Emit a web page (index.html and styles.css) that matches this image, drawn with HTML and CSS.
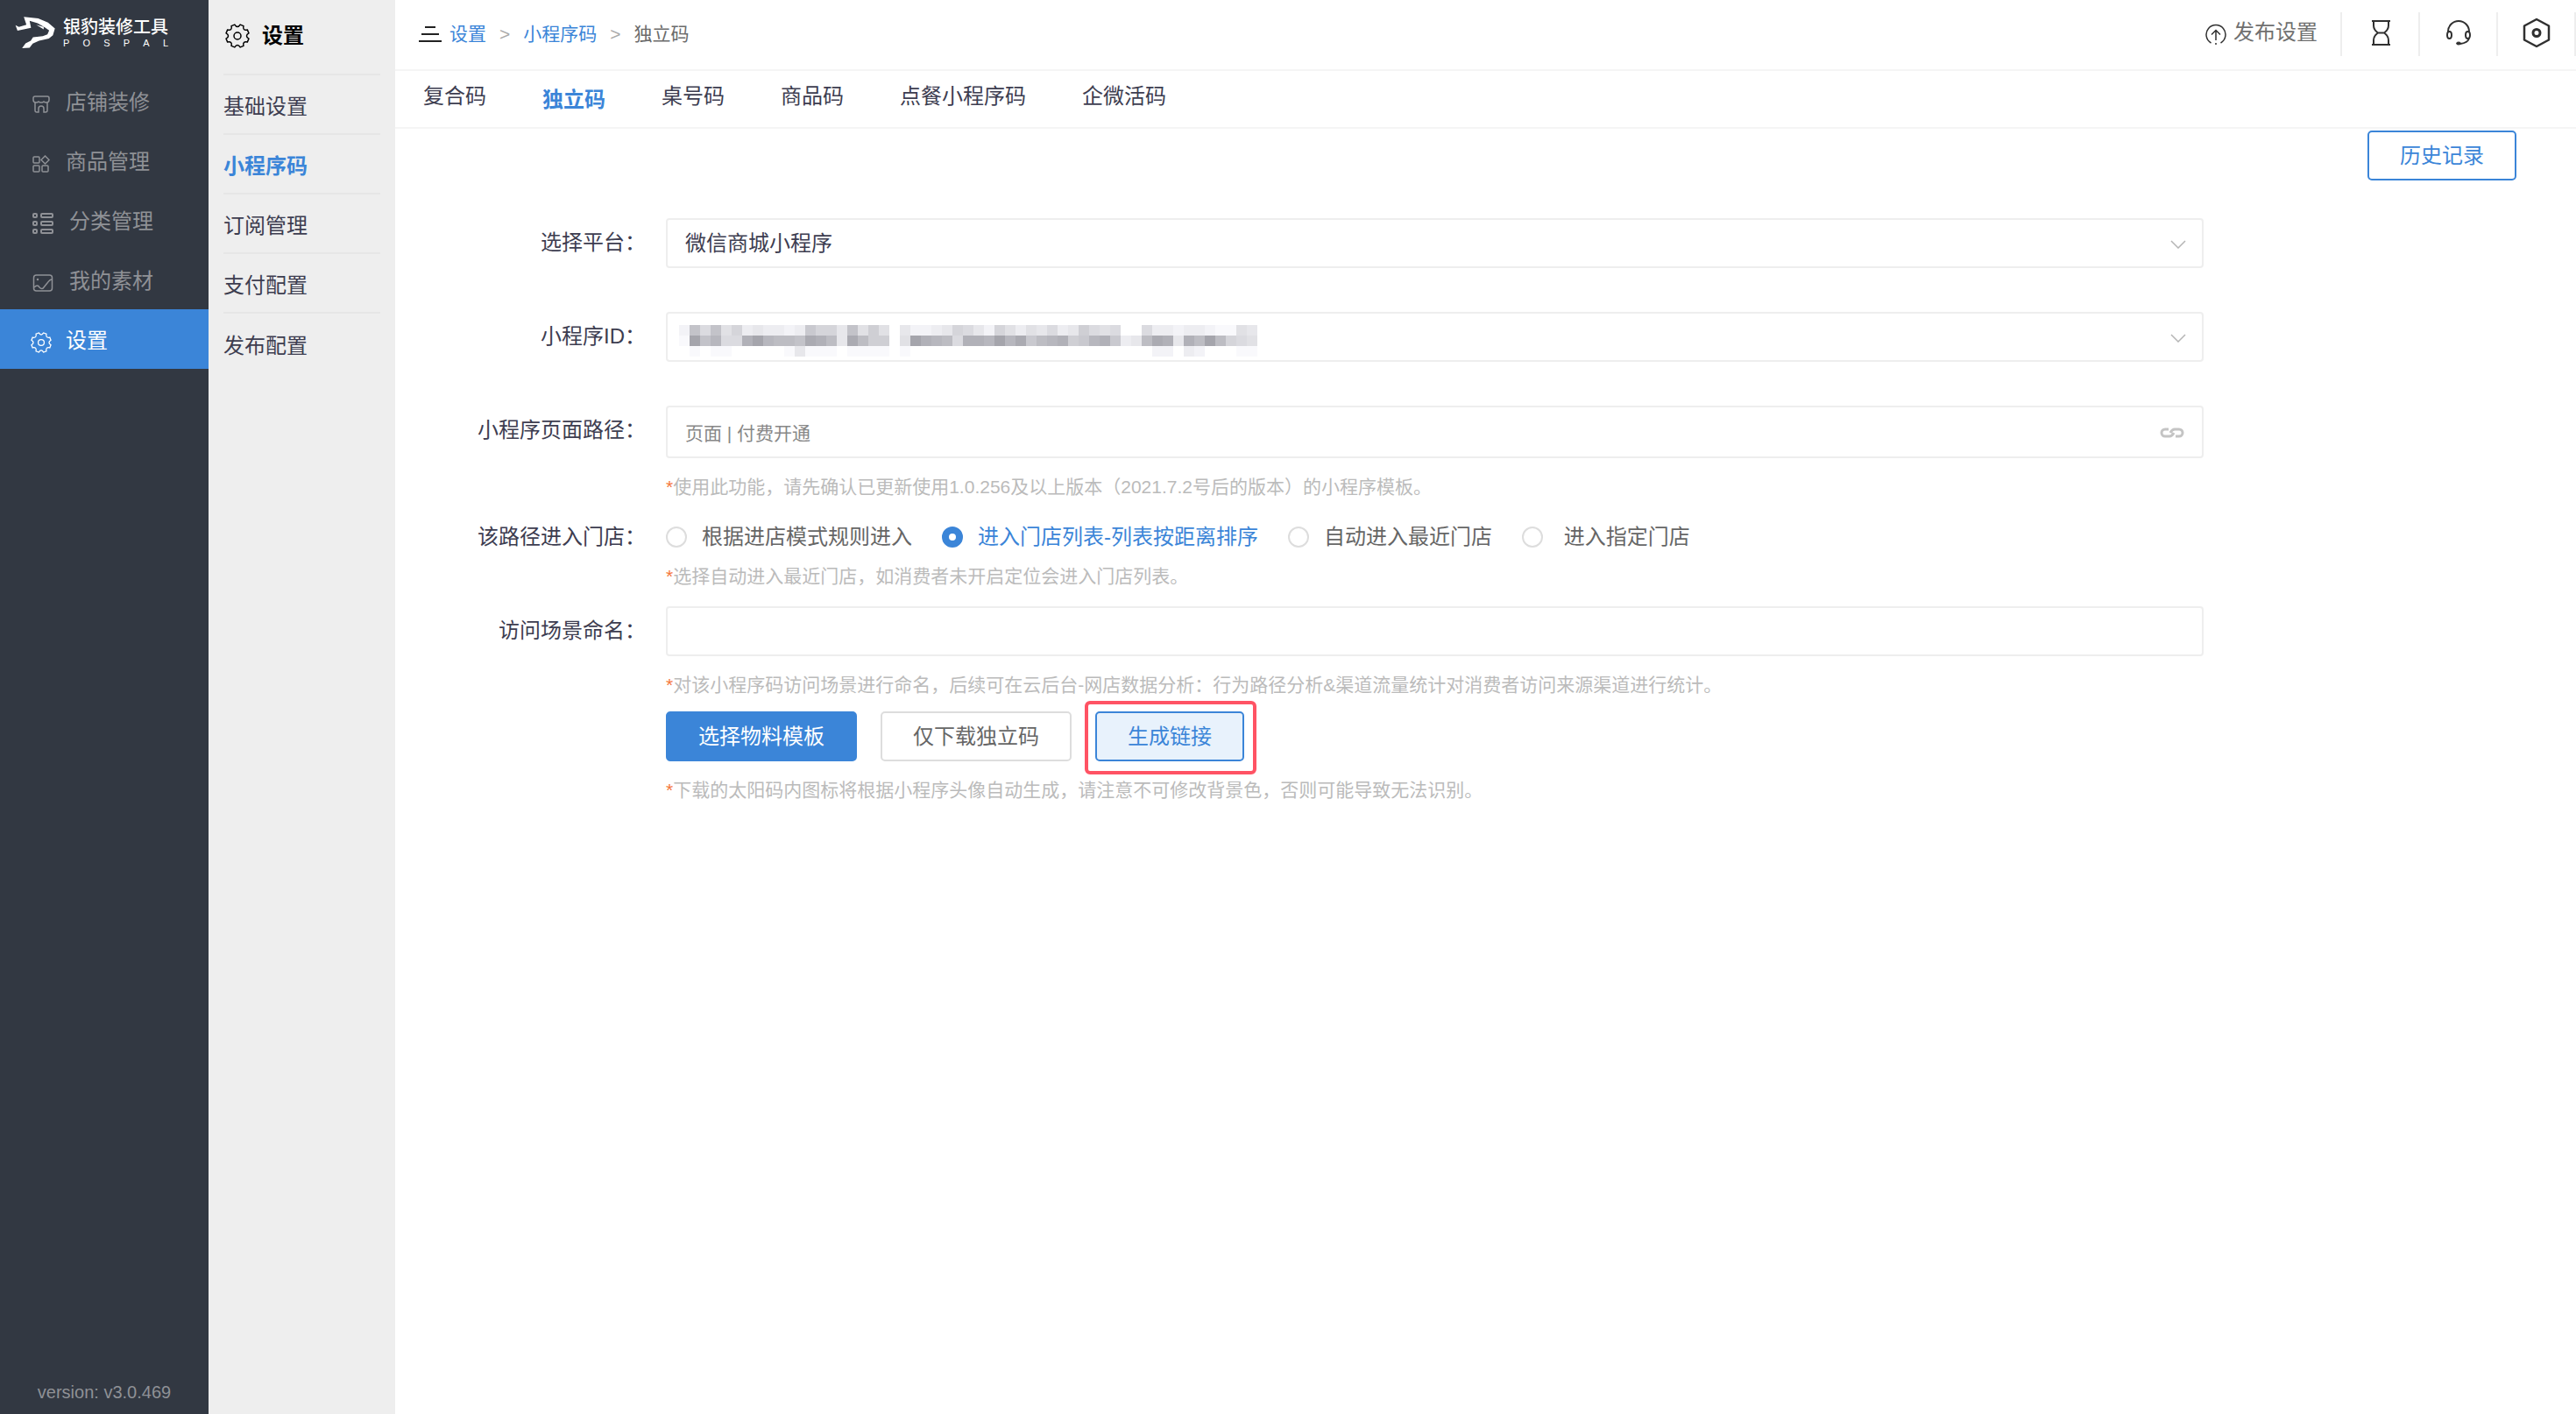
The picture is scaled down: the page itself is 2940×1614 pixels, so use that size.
FILE: index.html
```html
<!DOCTYPE html>
<html lang="zh-CN">
<head>
<meta charset="utf-8">
<title>独立码 - 银豹装修工具</title>
<meta name="viewport" content="width=device-width, initial-scale=1">
<link rel="stylesheet" href="styles.css">
</head>
<body>
<svg class="sprite" aria-hidden="true">
  <symbol id="gear" viewBox="-14 -14 28 28">
    <path d="M-3.200-12.900Q0-8 3.200-12.900L6.900-11.400Q5.700-5.700 11.400-6.900L12.900-3.200Q8 0 12.900 3.200L11.400 6.900Q5.700 5.700 6.900 11.400L3.200 12.900Q0 8-3.200 12.900L-6.900 11.400Q-5.700 5.700-11.400 6.900L-12.900 3.200Q-8 0-12.900-3.200L-11.400-6.900Q-5.700-5.700-6.900-11.400Z"/>
    <circle r="4"/>
  </symbol>
  <symbol id="chevron" viewBox="0 0 18 10"><path d="M1 1l8 8 8-8"/></symbol>
</svg>
<div class="app">
  <aside class="sidebar">
    <div class="brand">
      <svg class="brand-mark" viewBox="50 52 140 114" aria-hidden="true">
        <path fill="currentColor" d="M52 84l12 6 26-8-9-27 50 5 34 15 24 20-7 24-14 11-34 8-22 10-11 14-26 2 12-17 18-9 8-12 34-4 16-6 6-14-14-10-26-15-28-8 5 24-47 10zM124 82l26 8v8z"/>
      </svg>
      <div class="brand-text">
        <div class="brand-name">银豹装修工具</div>
        <div class="brand-sub"><span>P</span><span>O</span><span>S</span><span>P</span><span>A</span><span>L</span></div>
      </div>
    </div>
    <nav class="nav">
      <a class="nav-item" href="#">
        <svg class="nav-icon" viewBox="0 0 20 20"><path d="M3 1h14q2 0 2 2v2q0 3-3 3-2 0-3-1-1 1-3 1T7 7Q6 8 4 8 1 8 1 5V3q0-2 2-2zM3 8v9q0 2 2 2h2v-4q0-3 3-3t3 3v4h2q2 0 2-2V8"/></svg>
        店铺装修
      </a>
      <a class="nav-item" href="#">
        <svg class="nav-icon" viewBox="0 0 20 20"><rect x="1" y="2" width="7" height="7" rx="1"/><rect x="1" y="12" width="7" height="7" rx="1"/><rect x="11" y="12" width="7" height="7" rx="1"/><path d="M14.500 1l4.500 4.500-4.500 4.500L10 5.500z"/></svg>
        商品管理
      </a>
      <a class="nav-item" href="#">
        <svg class="nav-icon nav-icon--wide" viewBox="0 0 24 24"><g stroke-width="2"><rect x="1" y="1" width="4" height="4" rx="1"/><rect x="1" y="10" width="4" height="4" rx="1"/><rect x="1" y="19" width="4" height="4" rx="1"/><rect x="10" y="1" width="13" height="4" rx="1"/><rect x="10" y="10" width="13" height="4" rx="1"/><rect x="10" y="19" width="13" height="4" rx="1"/></g></svg>
        分类管理
      </a>
      <a class="nav-item" href="#">
        <svg class="nav-icon nav-icon--wide" viewBox="0 0 24 24"><rect x="1.500" y="3" width="21" height="18" rx="3"/><path d="M2 17q4-4 6 0 3 3 5 0l4-5q3-4 5-4"/><circle cx="6" cy="8" r=".5"/></svg>
        我的素材
      </a>
      <a class="nav-item nav-item--active" href="#" aria-current="page">
        <svg class="nav-icon nav-icon--gear"><use href="#gear"/></svg>
        设置
      </a>
    </nav>
    <div class="version">version: v3.0.469</div>
  </aside>

  <aside class="submenu">
    <h2 class="submenu-title"><svg class="submenu-icon" aria-hidden="true"><use href="#gear"/></svg>设置</h2>
    <nav>
      <a class="submenu-item" href="#">基础设置</a>
      <a class="submenu-item submenu-item--active" href="#">小程序码</a>
      <a class="submenu-item" href="#">订阅管理</a>
      <a class="submenu-item" href="#">支付配置</a>
      <a class="submenu-item" href="#">发布配置</a>
    </nav>
  </aside>

  <main class="main">
    <header class="topbar">
      <svg class="menu-icon" viewBox="0 0 28 18" aria-hidden="true"><path d="M8 1h12M4 9h20M1 17h26"/></svg>
      <nav class="crumbs">
        <a href="#">设置</a><span class="crumb-sep">&gt;</span><a href="#">小程序码</a><span class="crumb-sep">&gt;</span><span>独立码</span>
      </nav>
      <div class="actions">
        <button class="publish" type="button">
          <svg class="publish-icon" viewBox="0 0 24 24"><path d="M6.500 22A11 11 0 1 1 17.500 22M12 19V8M7 12.500l5-5 5 5M11 23h2"/></svg>
          发布设置
        </button>
        <button class="action" type="button" aria-label="任务">
          <svg viewBox="0 0 36 36"><path d="M8 4h21M8 31h21M10 4v5q0 5 5 8.500Q10 21 10 26v5M27 4v5q0 5-5 8.500Q27 21 27 26v5M15 17.500h7"/></svg>
        </button>
        <button class="action" type="button" aria-label="客服">
          <svg viewBox="0 0 36 36"><path d="M6 16a12 12 0 0 1 24 0M30 24q-2 5-10 6"/><ellipse cx="7.500" cy="20" rx="2.500" ry="4"/><ellipse cx="28.500" cy="20" rx="2.500" ry="4"/><ellipse cx="18" cy="29.500" rx="2.500" ry="1.500" fill="currentColor" stroke-width="1"/></svg>
        </button>
        <button class="action" type="button" aria-label="系统设置">
          <svg viewBox="0 0 36 36"><path stroke-width="2.500" stroke-linejoin="round" d="M18 2l14 7.500v16L18 33 4 25.500v-16z"/><circle cx="18" cy="17.500" r="4" stroke-width="3"/></svg>
        </button>
      </div>
    </header>

    <nav class="tabs">
      <a class="tab" href="#">复合码</a>
      <a class="tab tab--active" href="#" aria-current="page">独立码</a>
      <a class="tab" href="#">桌号码</a>
      <a class="tab" href="#">商品码</a>
      <a class="tab" href="#">点餐小程序码</a>
      <a class="tab" href="#">企微活码</a>
    </nav>

    <div class="toolbar"><button class="btn btn--outline" type="button">历史记录</button></div>

    <form class="form">
      <div class="row row--spaced">
        <label class="label" for="platform">选择平台：</label>
        <div class="field">
          <div class="control">
            <select class="input" id="platform"><option>微信商城小程序</option></select>
            <svg class="chevron" aria-hidden="true"><use href="#chevron"/></svg>
          </div>
        </div>
      </div>
      <div class="row row--spaced">
        <label class="label" for="appid">小程序ID：</label>
        <div class="field">
          <div class="control">
            <select class="input" id="appid"><option value="" label=" "></option></select>
            <svg class="masked" id="masked" viewBox="0 0 660 36" shape-rendering="crispEdges" aria-hidden="true"></svg>
            <svg class="chevron" aria-hidden="true"><use href="#chevron"/></svg>
          </div>
        </div>
      </div>
      <div class="row">
        <label class="label" for="path">小程序页面路径：</label>
        <div class="field">
          <div class="control">
            <input class="input input--path" id="path" type="text" value="页面 | 付费开通">
            <svg class="link-icon" viewBox="0 0 28 12" aria-hidden="true"><path d="M10 2H6a4 4 0 0 0 0 8h5q3 0 5-4M18 10h4a4 4 0 0 0 0-8h-5q-3 0-5 4"/></svg>
          </div>
          <p class="hint"><i>*</i>使用此功能，请先确认已更新使用1.0.256及以上版本（2021.7.2号后的版本）的小程序模板。</p>
        </div>
      </div>
      <div class="row row--radios" role="radiogroup" aria-labelledby="entry">
        <span class="label" id="entry">该路径进入门店：</span>
        <div class="field">
          <div class="radios">
            <label class="radio"><input type="radio" name="entry">根据进店模式规则进入</label>
            <label class="radio"><input type="radio" name="entry" checked><span>进入门店列表-列表按距离排序</span></label>
            <label class="radio"><input type="radio" name="entry">自动进入最近门店</label>
            <label class="radio"><input type="radio" name="entry">&nbsp;进入指定门店</label>
          </div>
          <p class="hint hint--tight"><i>*</i>选择自动进入最近门店，如消费者未开启定位会进入门店列表。</p>
        </div>
      </div>
      <div class="row row--scene">
        <label class="label" for="scene">访问场景命名：</label>
        <div class="field">
          <div class="control"><input class="input" id="scene" type="text"></div>
          <p class="hint"><i>*</i>对该小程序码访问场景进行命名，后续可在云后台-网店数据分析：行为路径分析&amp;渠道流量统计对消费者访问来源渠道进行统计。</p>
          <div class="buttons">
            <button class="btn btn--primary" type="button">选择物料模板</button>
            <button class="btn" type="button">仅下载独立码</button>
            <span class="marked"><button class="btn btn--light" type="button">生成链接</button></span>
          </div>
          <p class="hint"><i>*</i>下载的太阳码内图标将根据小程序头像自动生成，请注意不可修改背景色，否则可能导致无法识别。</p>
        </div>
      </div>
    </form>
  </main>
</div>
<script src="mask.js"></script>
</body>
</html>
```

FILE: styles.css
```css
* {
  box-sizing: border-box;
}

body {
  margin: 0;
  background: #fff;
  color: #3d3d50;
  font-family: "Liberation Sans", "Noto Sans CJK SC", sans-serif;
  font-size: 24px;
  line-height: 36px;
}

a {
  color: inherit;
  text-decoration: none;
}

button,
input,
select {
  font: inherit;
  color: inherit;
}

svg {
  display: block;
  flex: none;
  fill: none;
  stroke: currentColor;
  stroke-width: 1.5;
}

.sprite {
  position: absolute;
  width: 0;
  height: 0;
}

.app {
  display: flex;
  min-height: 100vh;
}

/* Dark sidebar */
.sidebar {
  display: flex;
  flex: none;
  flex-direction: column;
  width: 238px;
  background: #323842;
  color: #8f9196;
}

.brand {
  display: flex;
  gap: 9px;
  height: 81px;
  padding: 18px 0 0 17px;
  color: #fff;
}

.brand-mark {
  width: 46px;
  height: 38px;
  stroke: none;
}

.brand-text {
  width: 120px;
}

.brand-name {
  font-size: 20px;
  font-weight: 500;
  line-height: 26px;
  white-space: nowrap;
}

.brand-sub {
  display: flex;
  justify-content: space-between;
  font-size: 11px;
  line-height: 10px;
}

.nav-item {
  display: flex;
  align-items: center;
  gap: 18px;
  height: 68px;
  padding: 4px 0 0 37px;
}

.nav-item--active {
  background: #3b85d8;
  color: #fff;
}

.nav-icon {
  width: 20px;
  height: 20px;
  margin-top: 4px;
}

.nav-icon--wide {
  width: 24px;
  height: 24px;
}

.nav-icon--gear {
  width: 24px;
  height: 24px;
  margin-right: -2px;
  margin-left: -2px;
}

.version {
  margin-top: auto;
  padding-bottom: 7px;
  font-size: 20px;
  text-align: center;
}

/* Second-level menu */
.submenu {
  flex: none;
  width: 213px;
  padding: 0 17px;
  background: #eee;
}

.submenu-title {
  display: flex;
  align-items: center;
  gap: 14px;
  height: 86px;
  margin: 0;
  padding-bottom: 3px;
  border-bottom: 2px solid #e6e6e6;
  color: #000;
  font-size: 24px;
  font-weight: 700;
}

.submenu-icon {
  width: 28px;
  height: 28px;
  margin-left: 2px;
}

.submenu-item {
  display: flex;
  align-items: center;
  height: 68px;
  padding-top: 6px;
  border-bottom: 2px solid #e6e6e6;
}

.submenu-item:last-child {
  border-bottom: 0;
}

.submenu-item--active {
  color: #3b85d8;
  font-weight: 700;
}

/* Main column */
.main {
  flex: 1;
  min-width: 0;
}

.topbar {
  display: flex;
  align-items: center;
  height: 81px;
  padding: 0 0 2px 26px;
  border-bottom: 2px solid #f5f5f5;
}

.menu-icon {
  width: 28px;
  height: 18px;
  margin-right: 8px;
  color: #222;
  stroke-width: 2;
}

.crumbs {
  color: #6b6b6b;
  font-size: 21px;
}

.crumbs a {
  color: #3b85d8;
}

.crumb-sep {
  margin: 0 15px;
  color: #aaa;
}

.actions {
  display: flex;
  align-items: center;
  height: 50px;
  margin-left: auto;
}

.publish,
.action {
  display: flex;
  align-items: center;
  height: 50px;
  padding: 0 0 2px;
  border: 0;
  border-right: 2px solid #eee;
  background: none;
  color: #303030;
}

.publish {
  gap: 8px;
  padding: 0 26px 4px 0;
  color: #707070;
}

.publish-icon {
  width: 24px;
  height: 24px;
  margin-top: 4px;
  color: #303030;
}

.action {
  justify-content: center;
  width: 89px;
}

.action svg {
  width: 36px;
  height: 36px;
  stroke-width: 2;
}

.tabs {
  display: flex;
  height: 66px;
  border-bottom: 2px solid #f5f5f5;
}

.tab {
  padding: 11px 32px 0;
}

.tab--active {
  padding-top: 15px;
  color: #3b85d8;
  font-weight: 700;
}

.toolbar {
  display: flex;
  justify-content: flex-end;
  padding: 2px 68px 0 0;
}

/* Form */
.form {
  padding: 43px 425px 60px 0;
}

.row {
  display: flex;
}

.row--spaced {
  margin-bottom: 50px;
}

.row--radios {
  margin-top: 14px;
}

.row--scene {
  margin-top: 19px;
}

.label {
  flex: none;
  width: 309px;
  padding-right: 23px;
  line-height: 56px;
  text-align: right;
  white-space: nowrap;
}

.field {
  flex: 1;
  min-width: 0;
}

.control {
  position: relative;
}

.input {
  display: block;
  width: 100%;
  height: 57px;
  padding: 0 20px;
  border: 2px solid #eee;
  border-radius: 4px;
  outline: 0;
  background: #fff;
  appearance: none;
}

.input--path {
  height: 60px;
  color: #888;
  font-size: 21px;
}

.chevron {
  position: absolute;
  top: 25px;
  right: 20px;
  width: 18px;
  height: 10px;
  color: #b5b5b5;
}

.link-icon {
  position: absolute;
  top: 25px;
  right: 22px;
  width: 28px;
  height: 12px;
  color: #c4c4c4;
  stroke-width: 3;
}

.masked {
  position: absolute;
  top: 15px;
  left: 15px;
  width: 660px;
  height: 36px;
  stroke: none;
}

.hint {
  margin: 18px 0 0;
  color: #bbb;
  font-size: 21px;
  line-height: 30px;
}

.hint--tight {
  margin-top: 2px;
}

.hint i {
  color: #f5763b;
  font-style: normal;
}

.radios {
  display: flex;
  gap: 34px;
  height: 56px;
  color: #666;
}

.radio {
  display: flex;
  align-items: center;
  gap: 17px;
  white-space: nowrap;
}

.radio input {
  width: 24px;
  height: 24px;
  margin: 0;
  border: 2px solid #ddd;
  border-radius: 50%;
  background: #fff;
  appearance: none;
}

.radio input:checked {
  border: 8px solid #3b85d8;
}

.radio input:checked + span {
  color: #3b85d8;
}

.buttons {
  display: flex;
  gap: 27px;
  margin-top: 15px;
}

.btn {
  height: 57px;
  padding: 0 35px;
  border: 2px solid #ddd;
  border-radius: 5px;
  background: #fff;
  color: #666;
}

.btn--outline {
  border-color: #3b85d8;
  color: #3b85d8;
}

.btn--primary {
  border-color: #3b85d8;
  background: #3b85d8;
  color: #fff;
}

.btn--light {
  border-color: #3b85d8;
  background: #e8f2fc;
  color: #3b85d8;
}

/* Red frame that calls out a button */
.marked {
  position: relative;
}

.marked::after {
  position: absolute;
  inset: -12px -14px -15px -12px;
  border: 4px solid #ff5364;
  border-radius: 6px;
  content: "";
  pointer-events: none;
}
```

FILE: mask.js
```js
// Draws the pixelated account name; each hex digit is the darkness of one 12px cell.
const rows = [
  '2a6a573433239774a58504223476427535463486560063323321154',
  '1fac66dfcbbaedb4eb8805fdcb6ddcfce9bcd89cd934bed4dbfb765',
  '0101100000141110111101000000000000000000000002203200011'
];
const svg = document.getElementById('masked');
rows.forEach((row, y) => {
  [...row].forEach((digit, x) => {
    const depth = parseInt(digit, 16) * 6;
    if (!depth) return;
    const rect = document.createElementNS('http://www.w3.org/2000/svg', 'rect');
    rect.setAttribute('x', x * 12);
    rect.setAttribute('y', y * 12);
    rect.setAttribute('width', 12);
    rect.setAttribute('height', 12);
    rect.setAttribute('fill', `rgb(${255 - depth}, ${255 - depth}, ${Math.min(255, 258 - Math.round(depth * 0.95))})`);
    svg.append(rect);
  });
});
```
